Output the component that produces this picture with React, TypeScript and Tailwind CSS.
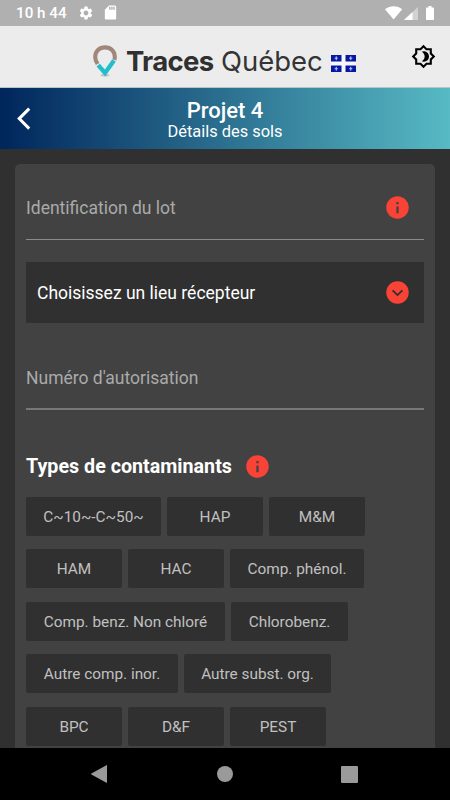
import React from 'react';
import { MdInfo, MdSettings, MdSdCard } from 'react-icons/md';

const contaminantRows = [
  [
    { label: 'C~10~-C~50~', width: 'w-[135px]' },
    { label: 'HAP', width: 'w-24' },
    { label: 'M&M', width: 'w-24' },
  ],
  [
    { label: 'HAM', width: 'w-24' },
    { label: 'HAC', width: 'w-24' },
    { label: 'Comp. phénol.', width: 'w-[134px]' },
  ],
  [
    { label: 'Comp. benz. Non chloré', width: 'w-[199px]' },
    { label: 'Chlorobenz.', width: 'w-[117px]' },
  ],
  [
    { label: 'Autre comp. inor.', width: 'w-[152px]' },
    { label: 'Autre subst. org.', width: 'w-[147px]' },
  ],
  [
    { label: 'BPC', width: 'w-24' },
    { label: 'D&F', width: 'w-24' },
    { label: 'PEST', width: 'w-24' },
  ],
];

function StatusBar() {
  return (
    <div className="h-[26px] shrink-0 bg-[#b0b0b0] flex items-center justify-between pl-4 pr-[15px] text-white">
      <div className="flex items-center">
        <span className="w-[62px] pt-[2px] text-[15.2px] font-medium leading-none whitespace-nowrap">10 h 44</span>
        <MdSettings className="w-4 h-4" />
        <MdSdCard className="w-[17px] h-[17px] ml-2" />
      </div>
      <svg className="w-[50px] h-[14px]" viewBox="0 0 50 14">
        <path d="M0 3.2C4.8-.9 12.4-.9 17.2 3.2L8.6 13.4z" fill="#fff" />
        <path d="M33 1v13H19z" fill="#d2d2d2" />
        <path d="M27.5 6.1V14H19z" fill="#fff" />
        <path d="M43.5 0h3v1.5h1.8c.5 0 .7.3.7.7v11c0 .5-.3.8-.7.8h-6.6c-.5 0-.7-.3-.7-.8v-11c0-.4.3-.7.7-.7h1.8z" fill="#fff" />
      </svg>
    </div>
  );
}

function PinLogo() {
  return (
    <svg className="w-6 h-8 shrink-0" viewBox="0 0 24 32">
      <ellipse cx="12" cy="30.3" rx="4.5" ry="1.2" fill="#c6c4c2" />
      <path d="M4.6 19C2.9 16.4 2.2 14.4 2.2 12 2.2 6.2 6.3 2.4 12 2.4s9.8 3.8 9.8 9.6c0 1-.1 1.9-.4 2.8" fill="none" stroke="#9f877b" strokeWidth="4.1" />
      <path d="M5.2 20.2L12 28 21 15.4" fill="none" stroke="#22bfcb" strokeWidth="4.3" />
    </svg>
  );
}

function QuebecFlag() {
  return (
    <svg className="w-[25px] h-[17px] shrink-0" viewBox="0 0 25 17">
      <rect width="25" height="17" fill="#f8f8fc" />
      {[[0, 0], [14.5, 0], [0, 10.5], [14.5, 10.5]].map(([x, y]) => (
        <g key={`${x}-${y}`} transform={`translate(${x} ${y})`}>
          <rect width="10.5" height="6.5" fill="#0719a0" />
          <path d="M5.25 1.3v3.9M3.7 3.2h3.1" stroke="#c3cafa" strokeWidth="1" />
        </g>
      ))}
    </svg>
  );
}

function ThemeIcon() {
  return (
    <svg className="w-[25px] h-[25px] ml-auto shrink-0" viewBox="0 0 24 24" fill="#000">
      <path d="M20 8.69V4h-4.69L12 .69 8.69 4H4v4.69L.69 12 4 15.31V20h4.69L12 23.31 15.31 20H20v-4.69L23.31 12 20 8.69zm-2 5.79V18h-3.52L12 20.48 9.52 18H6v-3.52L3.52 12 6 9.52V6h3.52L12 3.52 14.48 6H18v3.52L20.48 12 18 14.48z" />
      <path d="M12.29 7c-.74 0-1.45.17-2.08.46 1.72.79 2.92 2.53 2.92 4.54s-1.2 3.75-2.92 4.54c.63.29 1.34.46 2.08.46 2.76 0 5-2.24 5-5s-2.24-5-5-5z" />
    </svg>
  );
}

function Brand() {
  return (
    <div className="h-[62px] shrink-0 bg-[#ececec] border-b border-[#b8c4cc] flex items-center pl-[93px] pr-[14px]">
      <div className="flex items-center pt-2">
        <PinLogo />
        <div className="flex items-center ml-[9px] w-[197px] h-9 font-['Inter'] text-[27.5px] leading-9 text-[#303030] whitespace-nowrap">
          <span className="font-bold w-[95px] tracking-[-0.7px]">Traces</span>
          <span className="text-[#343434] tracking-[-0.05px]">Québec</span>
        </div>
        <div className="ml-2 mt-[5px]">
          <QuebecFlag />
        </div>
      </div>
      <ThemeIcon />
    </div>
  );
}

function TitleBar() {
  return (
    <div className="h-[61px] shrink-0 flex items-center bg-linear-to-r/srgb from-[#00265c] to-[#57bac4] text-white">
      <svg className="w-[50px] h-6 shrink-0" viewBox="0 0 50 24" fill="none" stroke="currentColor" strokeWidth="3">
        <path d="M29.2 1.6L19.2 11.6 29.2 21.6" />
      </svg>
      <div className="flex-1 pr-[50px] pt-px text-center">
        <h1 className="text-[22px] leading-[25px] font-medium">Projet 4</h1>
        <p className="text-[16.4px] leading-[18px]">Détails des sols</p>
      </div>
    </div>
  );
}

function DropdownIcon() {
  return (
    <svg className="w-[23px] h-[23px]" viewBox="0 0 23 23">
      <circle cx="11.5" cy="11.5" r="11.2" fill="#f94336" />
      <path d="M6.6 9.3l4.9 4.8 4.9-4.8" fill="none" stroke="#303030" strokeWidth="1.8" />
    </svg>
  );
}

export default function App() {
  return (
    <div className="w-full h-[800px] flex flex-col overflow-hidden bg-[#303030] font-['Roboto',sans-serif]">
      <StatusBar />
      <Brand />
      <TitleBar />

      <main className="flex-1 min-h-0 overflow-hidden px-[15px] pt-[15px]">
        <div className="h-[640px] rounded-t-[5px] bg-[#424242] px-[11px]">
          {/* Lot */}
          <div className="h-[76px] border-b border-[#8b8b8b] flex items-center justify-between pr-[13px] pt-[11px]">
            <span className="pt-[3px] text-[17.5px] text-[#aaaaaa]">Identification du lot</span>
            <MdInfo className="w-[27px] h-[27px] text-[#f94336]" />
          </div>

          {/* Receiving site */}
          <div className="mt-[22px] h-[61px] bg-[#303030] flex items-center justify-between pl-[11px] pr-[15px]">
            <span className="pt-[2px] text-[17.5px] text-white">Choisissez un lieu récepteur</span>
            <DropdownIcon />
          </div>

          <div className="h-[87px] border-b-2 border-[#777777] flex items-center pt-[24px]">
            <span className="pt-px text-[17.5px] text-[#aaaaaa]">Numéro d'autorisation</span>
          </div>

          <div className="mt-[41px] h-[30px] flex items-center">
            <h2 className="w-[217.5px] pt-[2px] text-[19.7px] font-bold text-white whitespace-nowrap">Types de contaminants</h2>
            <MdInfo className="w-[27px] h-[27px] text-[#f94336]" />
          </div>

          <div className="mt-4 flex flex-col gap-[13.4px]">
            {contaminantRows.map((row, i) => (
              <div key={i} className="flex gap-[6px]">
                {row.map((chip) => (
                  <button
                    key={chip.label}
                    className={`${chip.width} h-[39px] pt-[2px] shrink-0 rounded-[2px] bg-[#303030] text-[15.35px] text-[#c0c0c0] whitespace-nowrap`}
                  >
                    {chip.label}
                  </button>
                ))}
              </div>
            ))}
          </div>
        </div>
      </main>

      {/* System navigation */}
      <nav className="h-[52px] shrink-0 bg-black flex items-center justify-between pl-[91px] pr-[92px]">
        <svg className="w-[17px] h-[18px]" viewBox="0 0 17 18">
          <path d="M16 .4v17.2c0 .3-.3.4-.6.2L.4 9.6c-.5-.3-.5-.9 0-1.2L15.4.2c.3-.2.6-.1.6.2z" fill="#9a9a9a" />
        </svg>
        <span className="w-4 h-4 rounded-full bg-[#9a9a9a]" />
        <span className="w-[17px] h-[17px] rounded-[1px] bg-[#9a9a9a]" />
      </nav>
    </div>
  );
}
